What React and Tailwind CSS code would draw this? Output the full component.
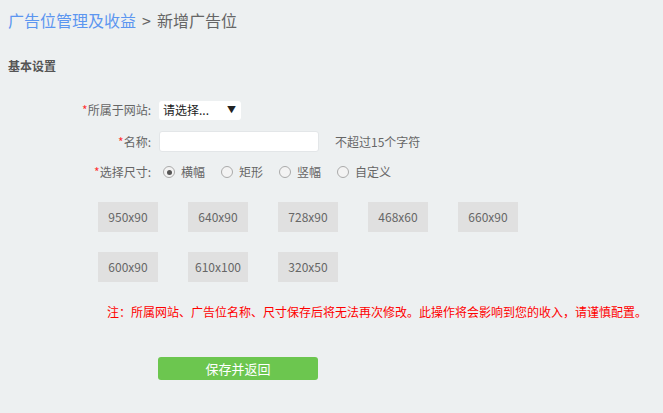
import React, { useState } from "react";

const sizes = [
  ["950x90", "640x90", "728x90", "468x60", "660x90"],
  ["600x90", "610x100", "320x50"],
];

const shapes = ["横幅", "矩形", "竖幅", "自定义"];

function Label({ children }) {
  return (
    <div className="w-[159px] shrink-0 text-right text-[12px] text-[#666] pr-[8px]">
      <span className="text-[#f33]">*</span>
      {children}
    </div>
  );
}

export default function App() {
  const [shape, setShape] = useState("横幅");
  return (
    <div
      className="w-[663px] h-[413px] bg-[#edf0f1] overflow-hidden"
      style={{ fontFamily: "'Microsoft YaHei', 'Noto Sans CJK SC', 'Liberation Sans', sans-serif" }}
    >
      <div className="pl-[8px] pt-[8px] text-[16px] leading-[24px] flex items-center">
        <span className="text-[#5c96f0]">广告位管理及收益</span>
        <span className="text-[#666] mx-[6px]">&gt;</span>
        <span className="text-[#666]">新增广告位</span>
      </div>

      <div className="pl-[8px] mt-[26px] text-[12px] font-bold text-[#555] leading-[16px]">基本设置</div>

      <div className="mt-[26px] flex flex-col">
        <div className="flex items-center h-[20px]">
          <Label>所属于网站:</Label>
          <div className="w-[82px] h-[19px] bg-white rounded-[3px] flex items-center justify-between pl-[4px] pr-[5px] text-[12px] text-[#222]">
            <span>请选择...</span>
            <span className="text-[9px]">▼</span>
          </div>
        </div>

        <div className="flex items-center h-[21px] mt-[11px]">
          <Label>名称:</Label>
          <div className="w-[160px] h-[21px] bg-white rounded-[3px] border border-[#e3e6e8]" />
          <span className="ml-[16px] text-[12px] text-[#666]">不超过15个字符</span>
        </div>

        <div className="flex items-center h-[20px] mt-[10px]">
          <Label>选择尺寸:</Label>
          <div className="flex items-center pl-[4px] text-[12px] text-[#666]">
            {shapes.map((s) => (
              <label key={s} className="flex items-center mr-[16px]" onClick={() => setShape(s)}>
                <span className="w-[12px] h-[12px] rounded-full border border-[#aaa] bg-[#f3f3f3] flex items-center justify-center mr-[6px]">
                  {shape === s && <span className="w-[5px] h-[5px] rounded-full bg-[#555]" />}
                </span>
                {s}
              </label>
            ))}
          </div>
        </div>
      </div>

      <div className="mt-[20px] pl-[98px] flex flex-col gap-[20px]">
        {sizes.map((row, i) => (
          <div key={i} className="flex gap-[30px]">
            {row.map((s) => (
              <div key={s} className="w-[60px] h-[30px] bg-[#e0e0e0] flex items-center justify-center text-[12px] text-[#666]">
                {s}
              </div>
            ))}
          </div>
        ))}
      </div>

      <div className="mt-[22px] pl-[107px] text-[12px] leading-[16px] text-[#f00]">
        注：所属网站、广告位名称、尺寸保存后将无法再次修改。此操作将会影响到您的收入，请谨慎配置。
      </div>

      <div className="mt-[35px] pl-[158px]">
        <button className="w-[160px] h-[23px] rounded-[3px] bg-[#6cc64f] text-white text-[13px] leading-[23px]">
          保存并返回
        </button>
      </div>
    </div>
  );
}
